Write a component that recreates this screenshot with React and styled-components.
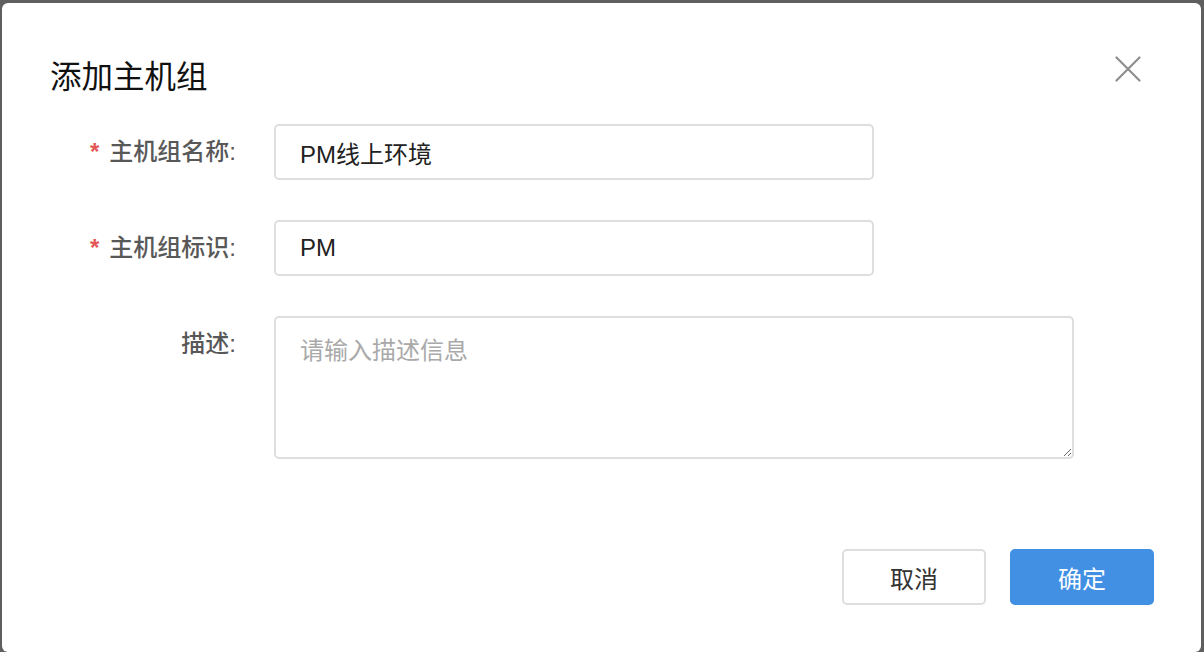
import styled, { createGlobalStyle } from "styled-components";

const GlobalStyle = createGlobalStyle`
  html, body {
    margin: 0;
    padding: 0;
    background: #5f5f5f;
    height: 652px;
    overflow: hidden;
  }
  * {
    box-sizing: border-box;
  }
`;

const FONT = `"Helvetica Neue", "Liberation Sans", "Noto Sans CJK SC", sans-serif`;

const App = () => {
  return (
    <>
      <GlobalStyle />
      <Dialog>
        <Header>
          <Title>添加主机组</Title>
          <CloseButton aria-label="关闭">
            <svg width="26" height="26" viewBox="0 0 26 26">
              <path
                d="M1.5 1.5 L24.5 24.5 M24.5 1.5 L1.5 24.5"
                stroke="#8f8f8f"
                strokeWidth="2.2"
                strokeLinecap="round"
              />
            </svg>
          </CloseButton>
        </Header>

        <Form>
          <Row>
            <Label required>主机组名称:</Label>
            <Input defaultValue="PM线上环境" />
          </Row>
          <Row>
            <Label required>主机组标识:</Label>
            <Input defaultValue="PM" />
          </Row>
          <Row>
            <Label>描述:</Label>
            <TextArea placeholder="请输入描述信息" />
          </Row>
        </Form>

        <Footer>
          <Button>取消</Button>
          <Button primary>确定</Button>
        </Footer>
      </Dialog>
    </>
  );
};

const Dialog = styled.div`
  margin: 3px 3px 0 2px;
  height: 649px;
  background: #fff;
  border-radius: 6px;
  font-family: ${FONT};
  display: flex;
  flex-direction: column;
`;

const Header = styled.div`
  display: flex;
  justify-content: space-between;
  align-items: flex-start;
  padding: 57px 60px 0 48px;
`;

const Title = styled.h2`
  margin: 0;
  font-size: 31.5px;
  line-height: 34px;
  font-weight: 400;
  color: #111;
`;

const CloseButton = styled.button`
  border: 0;
  background: none;
  padding: 0;
  margin-top: -4px;
  width: 26px;
  height: 26px;
  cursor: pointer;
  display: flex;
`;

const Form = styled.div`
  display: flex;
  flex-direction: column;
  gap: 40px;
  padding: 30px 0 0 48px;
`;

const Row = styled.div`
  display: flex;
  align-items: flex-start;
`;

const Label = styled.label`
  width: 224px;
  flex-shrink: 0;
  padding-right: 38px;
  text-align: right;
  font-size: 24px;
  line-height: 56px;
  font-weight: 500;
  color: #585858;

  &::before {
    content: ${({ required }) => (required ? '"*"' : "none")};
    color: #e25656;
    font-weight: 700;
    margin-right: 10px;
  }
`;

const Input = styled.input`
  width: 600px;
  height: 56px;
  border: 2px solid #dedede;
  border-radius: 5px;
  padding: 0 24px;
  font-family: ${FONT};
  font-size: 24px;
  color: #222;
  outline: none;
`;

const TextArea = styled.textarea`
  width: 800px;
  height: 143px;
  border: 2px solid #dedede;
  border-radius: 5px;
  padding: 16px 24px;
  font-family: ${FONT};
  font-size: 24px;
  line-height: 34px;
  color: #222;
  outline: none;
  resize: vertical;

  &::placeholder {
    color: #a9a9a9;
  }
`;

const Footer = styled.div`
  display: flex;
  justify-content: flex-end;
  gap: 24px;
  padding: 90px 47px 0 0;
`;

const Button = styled.button`
  width: 144px;
  height: 56px;
  border-radius: 5px;
  font-family: ${FONT};
  font-size: 24px;
  cursor: pointer;
  border: 2px solid ${({ primary }) => (primary ? "#4190e4" : "#dedede")};
  background: ${({ primary }) => (primary ? "#4190e4" : "#fff")};
  color: ${({ primary }) => (primary ? "#fff" : "#333")};
`;

export default App;
